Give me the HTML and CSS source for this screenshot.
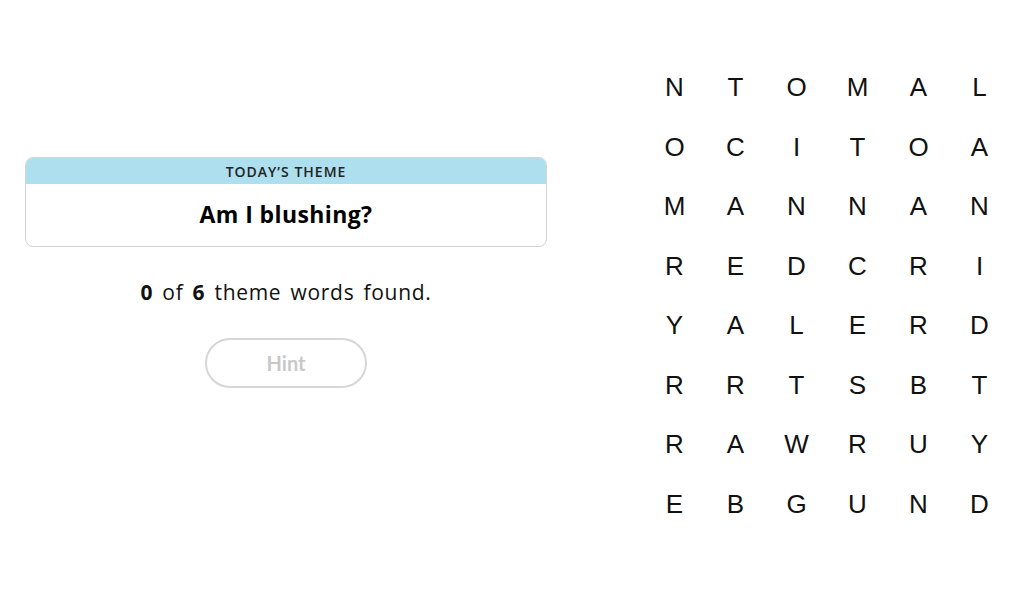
FILE: index.html
```html
<!DOCTYPE html>
<html lang="en">
<head>
  <meta charset="UTF-8">
  <title>Strands</title>
  <link rel="stylesheet" href="styles.css">
</head>
<body>
  <div class="game">
    <div class="side">
      <div class="theme-card">
        <div class="theme-label">TODAY&rsquo;S THEME</div>
        <div class="theme-title">Am I blushing?</div>
      </div>
      <p class="progress"><b>0</b> of <b>6</b> theme words found.</p>
      <button class="hint-btn" disabled>Hint</button>
    </div>

    <div class="board" id="board"></div>
  </div>

  <script>
    const rows = [
      'NTOMAL',
      'OCITOA',
      'MANNAN',
      'REDCRI',
      'YALERD',
      'RRTSBT',
      'RAWRUY',
      'EBGUND'
    ];

    const board = document.getElementById('board');
    rows.forEach(row => {
      row.split('').forEach(ch => {
        const cell = document.createElement('div');
        cell.className = 'cell';
        cell.textContent = ch;
        board.appendChild(cell);
      });
    });
  </script>
</body>
</html>
```

FILE: styles.css
```css
body {
  margin: 0;
  padding: 0;
  background: #fff;
  color: #000;
  font-family: "Open Sans", "Liberation Sans", Arial, sans-serif;
}
.game {
  display: flex;
  align-items: flex-start;
}
.side {
  width: 522px;
  margin-left: 25px;
  padding-top: 157px;
  display: flex;
  flex-direction: column;
  align-items: center;
}
.theme-card {
  width: 100%;
  box-sizing: border-box;
  border: 1.5px solid #d4d4d4;
  border-radius: 8px;
  overflow: hidden;
  text-align: center;
}
.theme-label {
  background: #aedfee;
  height: 26px;
  line-height: 27px;
  font-size: 14px;
  font-weight: 600;
  letter-spacing: 1px;
  color: #222;
}
.theme-title {
  height: 62px;
  line-height: 60px;
  font-size: 23px;
  font-weight: bold;
  letter-spacing: 0.4px;
}
.progress {
  margin: 32px 0 0;
  font-size: 21px;
  line-height: 26px;
  letter-spacing: 0.7px;
  word-spacing: 3px;
  color: #111;
}
.hint-btn {
  margin-top: 33px;
  width: 162px;
  height: 50px;
  border: 2px solid #d6d6d6;
  border-radius: 25px;
  background: #fff;
  color: #c8c8c8;
  font-family: Lato, "Liberation Sans", sans-serif;
  font-size: 20px;
  font-weight: bold;
}
.board {
  margin-left: 97px;
  padding-top: 58px;
  display: grid;
  grid-template-columns: repeat(6, 61px);
  grid-auto-rows: 59.5px;
}
.cell {
  display: flex;
  align-items: center;
  justify-content: center;
  font-family: "Liberation Sans", Arial, sans-serif;
  font-size: 26px;
  color: #111;
}
```
